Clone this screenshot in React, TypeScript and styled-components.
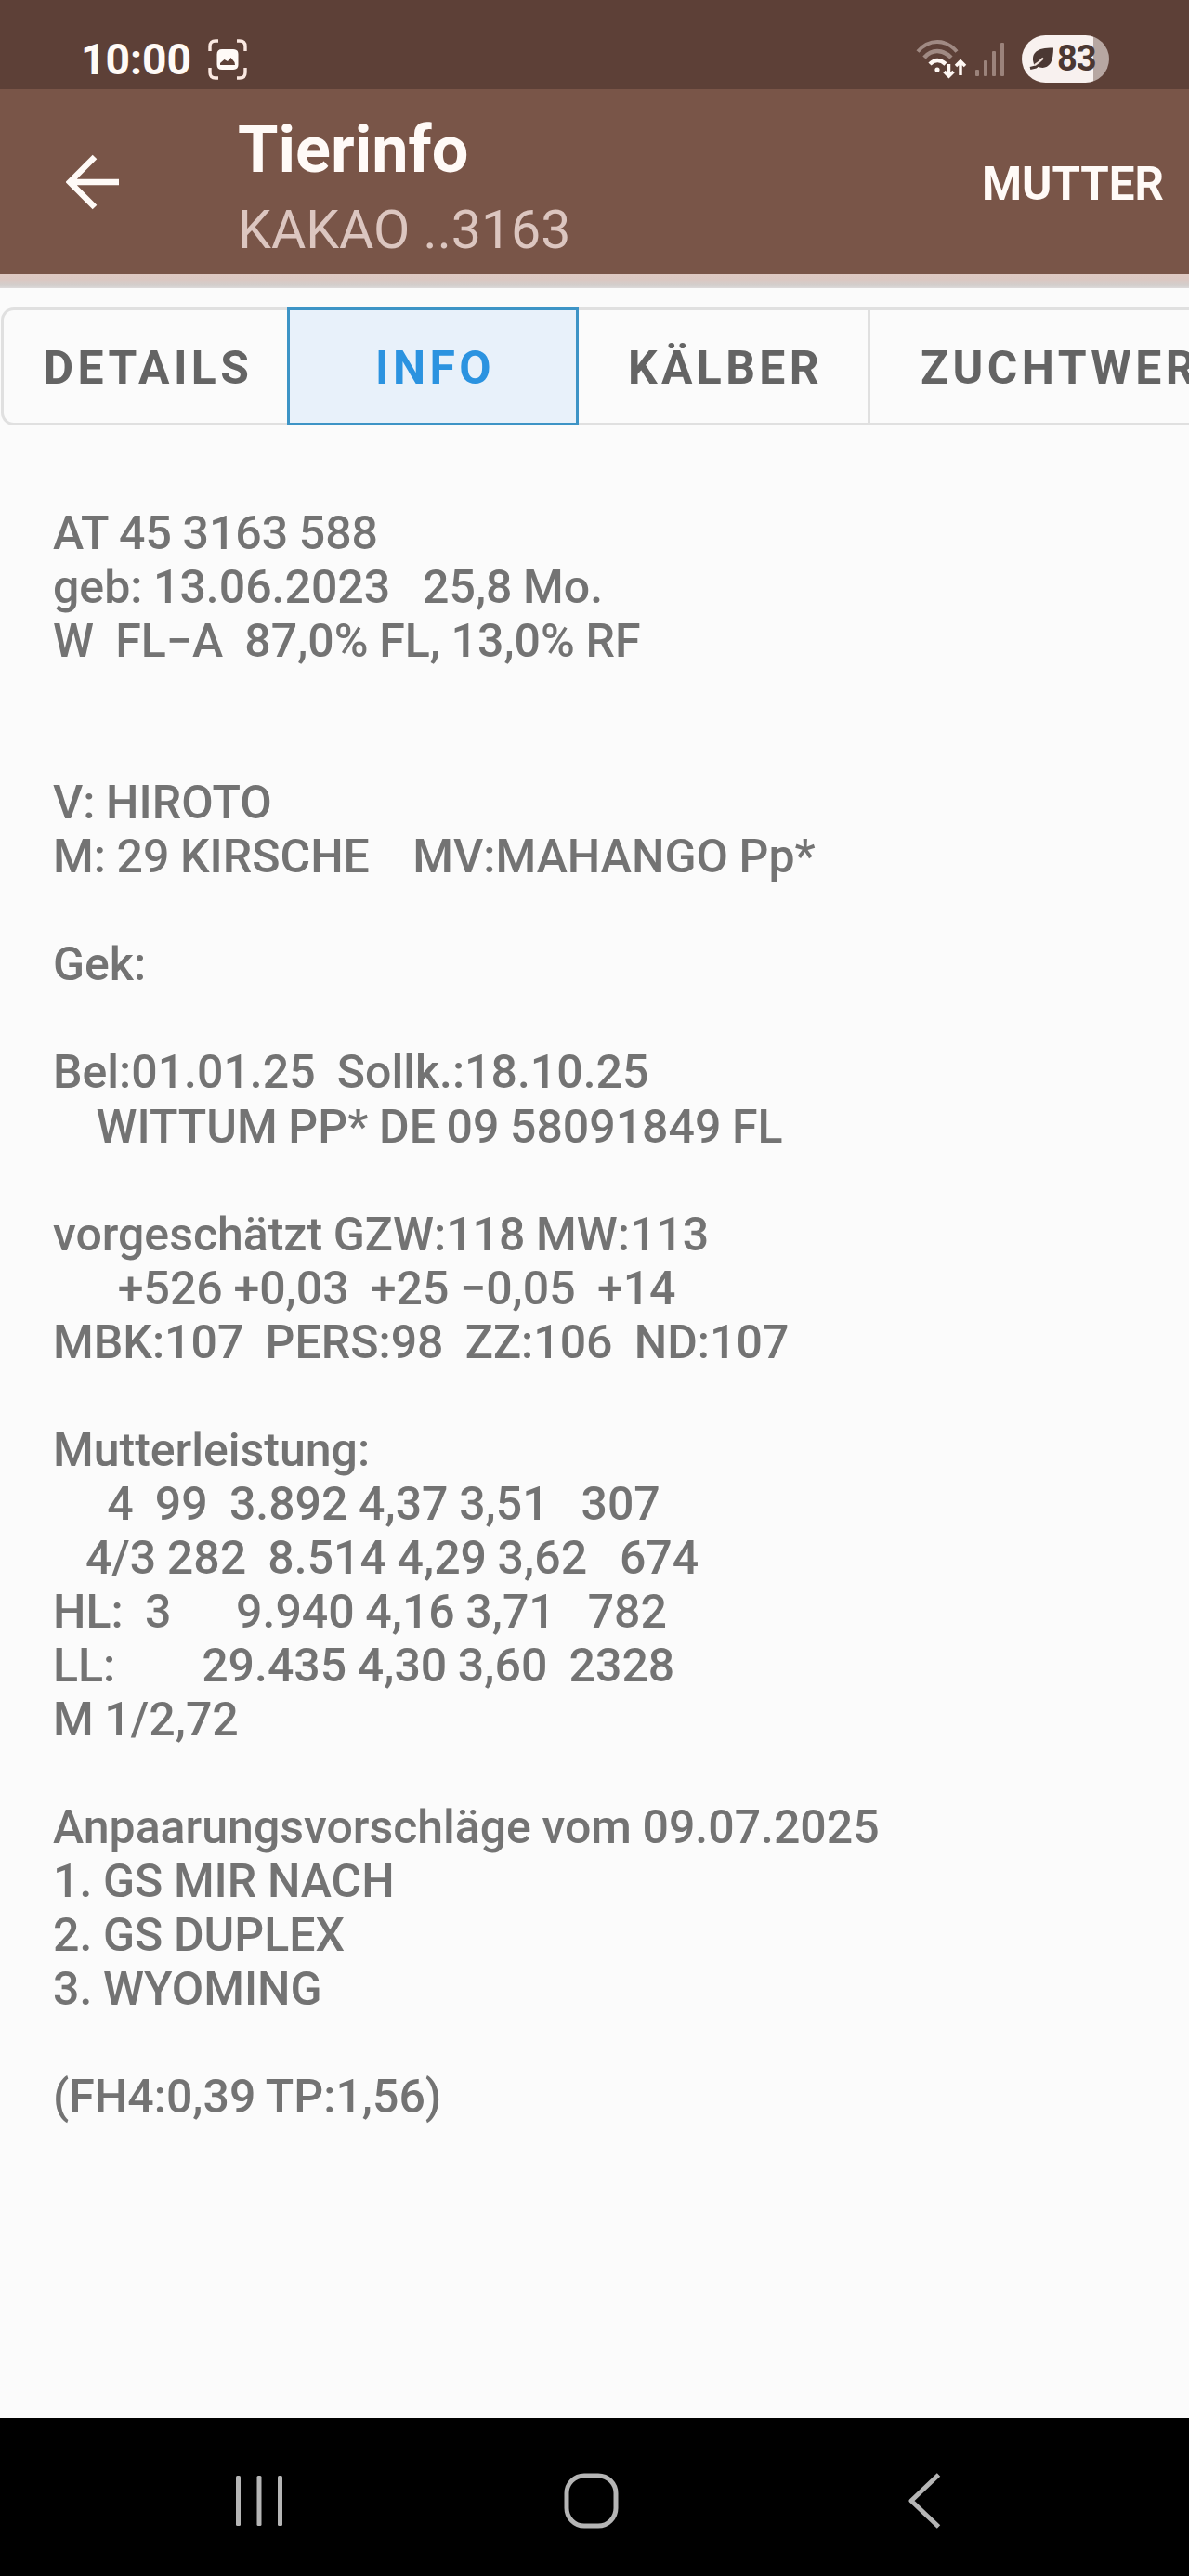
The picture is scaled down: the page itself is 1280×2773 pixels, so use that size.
import React from 'react';
import styled, { createGlobalStyle } from 'styled-components';

const GlobalStyle = createGlobalStyle`
  *, *::before, *::after { box-sizing: border-box; }
  html, body { margin: 0; padding: 0; background: #fbfbfb; }
  body { overflow: hidden; }
`;

const Screen = styled.div`
  width: 1280px;
  height: 2773px;
  display: flex;
  flex-direction: column;
  overflow: hidden;
  background: #fbfbfb;
  font-family: Roboto, 'Liberation Sans', sans-serif;
  color: #737373;
`;

const StatusBar = styled.div`
  flex: none;
  height: 96px;
  padding: 31px 86px 0 87px;
  display: flex;
  justify-content: space-between;
  align-items: flex-start;
  background: #5d4037;
`;

const StatusGroup = styled.div`
  display: flex;
  align-items: center;
  height: 66px;
`;

const Clock = styled.span`
  width: 137px;
  padding-bottom: 1px;
  font-size: 46.2px;
  line-height: 54px;
  font-weight: 700;
  color: #fffaf6;
`;

const BatteryPill = styled.div`
  width: 94px;
  height: 51px;
  margin: 0 0 2px 19px;
  padding-left: 8px;
  display: flex;
  align-items: center;
  gap: 3px;
  border-radius: 26px;
  background: linear-gradient(to right, #f8f1ef 0, #f8f1ef 77px, #b7a7a2 77px);
  color: #4b3833;
  font-size: 38px;
  font-weight: 700;
  line-height: 50px;
  letter-spacing: -1px;
`;

const AppBar = styled.header`
  flex: none;
  height: 199px;
  padding: 0 27px 0 71px;
  display: flex;
  align-items: center;
  background: #795548;
  color: #fffaf7;
`;

const BackButton = styled.div`
  width: 185px;
  display: flex;
`;

const Titles = styled.div`
  flex: 1;
  align-self: flex-start;
  padding-top: 23px;
  display: flex;
  flex-direction: column;
  gap: 12px;
`;

const Title = styled.h1`
  margin: 0;
  font-size: 70.2px;
  line-height: 84px;
  font-weight: 700;
`;

const Subtitle = styled.div`
  font-size: 57.2px;
  line-height: 66px;
  font-weight: 450;
  color: #dcc6c0;
`;

const Action = styled.div`
  padding-top: 4px;
  font-size: 49.2px;
  line-height: 60px;
  font-weight: 700;
`;

const Strip = styled.div`
  flex: none;
  height: 15px;
  background: linear-gradient(#dfc9c2 0, #dac8c3 7px, #d3cecc 12px, #dddada 15px);
`;

const Tabs = styled.nav`
  flex: none;
  margin: 21px 0 0 1px;
  height: 127px;
  display: flex;
  overflow: hidden;
`;

const Tab = styled.div<{ $width: number; $kind: 'first' | 'active' | 'plain' | 'last' }>`
  flex: none;
  width: ${p => p.$width}px;
  padding-top: 3px;
  padding-left: ${p => (p.$kind === 'last' ? 54 : p.$kind === 'first' ? 6 : 5)}px;
  display: flex;
  align-items: center;
  justify-content: ${p => (p.$kind === 'last' ? 'flex-start' : 'center')};
  white-space: nowrap;
  overflow: hidden;
  font-size: 49.8px;
  line-height: 60px;
  font-weight: 700;
  letter-spacing: 4.4px;
  color: ${p => (p.$kind === 'active' ? '#2b93e0' : '#646464')};
  background: ${p => (p.$kind === 'active' ? '#e8f1fa' : 'transparent')};
  border: 0 solid #e0e0e0;
  border-width: ${p => ({ first: '3px 0 3px 3px', active: '3px', plain: '3px 3px 3px 0', last: '3px 0' })[p.$kind]};
  border-color: ${p => (p.$kind === 'active' ? '#3d94c6' : '#e0e0e0')};
  border-radius: ${p => (p.$kind === 'first' ? '14px 0 0 14px' : '0')};
`;

const InfoText = styled.main`
  flex: 1;
  padding: 87px 0 0 57px;
  font-size: 50px;
  line-height: 58.04px;
  font-weight: 500;
  word-spacing: -0.8px;
  white-space: pre;
`;

const NavBar = styled.footer`
  flex: none;
  height: 170px;
  padding: 8px 105px 0 100px;
  display: grid;
  grid-template-columns: repeat(3, 1fr);
  align-items: center;
  justify-items: center;
  background: #000;
`;

const info = `AT 45 3163 588
geb: 13.06.2023   25,8 Mo.
W  FL−A  87,0% FL, 13,0% RF


V: HIROTO
M: 29 KIRSCHE    MV:MAHANGO Pp*

Gek:

Bel:01.01.25  Sollk.:18.10.25
    WITTUM PP* DE 09 58091849 FL

vorgeschätzt GZW:118 MW:113
      +526 +0,03  +25 −0,05  +14
MBK:107  PERS:98  ZZ:106  ND:107

Mutterleistung:
     4  99  3.892 4,37 3,51   307
   4/3 282  8.514 4,29 3,62   674
HL:  3      9.940 4,16 3,71   782
LL:        29.435 4,30 3,60  2328
M 1/2,72

Anpaarungsvorschläge vom 09.07.2025
1. GS MIR NACH
2. GS DUPLEX
3. WYOMING

(FH4:0,39 TP:1,56)`;

const CaptureIcon = () => (
  <svg width="42" height="44" viewBox="0 0 42 44" fill="none">
    <path d="M2 13V8Q2 2 8 2H11M31 2H34Q40 2 40 8V13M40 31V36Q40 42 34 42H31M11 42H8Q2 42 2 36V31" stroke="#fbe9e2" strokeWidth="3.4" />
    <path fillRule="evenodd" fill="#fffaf7" d="M15 11H27Q32.500 11 32.500 16.500V27.500Q32.500 33 27 33H15Q9.500 33 9.500 27.500V16.500Q9.500 11 15 11ZM13 28H29L28.500 25L24.500 20L21 24L17.500 22L13 26Z" />
  </svg>
);

const WifiIcon = () => (
  <svg width="56" height="44" viewBox="0 0 56 44" fill="none">
    <path d="M2 13.500Q11 3 23 3T44 13.500" stroke="#a08a83" strokeWidth="4" />
    <path d="M9 20Q15 13 23 13T38 20" stroke="#a08a83" strokeWidth="4.500" />
    <path d="M15 27Q23 19 32 27" stroke="#fff8f4" strokeWidth="4.500" />
    <circle cx="23" cy="33" r="2.600" fill="#fff8f4" />
    <path d="M35.500 27V39M30.500 35L35.500 40L40.500 35M48 39V25M43 29L48 24L53 29" stroke="#fff8f4" strokeWidth="3.500" />
  </svg>
);

const SignalIcon = () => (
  <svg width="31" height="40" viewBox="0 0 31 40">
    <g fill="#9b837b">
      <rect x="0" y="31" width="4" height="7" rx="1" />
      <rect x="9" y="21" width="4" height="17" rx="1" />
      <rect x="18" y="11" width="4" height="27" rx="1" />
      <rect x="27" y="2" width="4" height="36" rx="1" />
    </g>
  </svg>
);

const SignalWrap = styled.div`
  margin-left: 8px;
  padding-bottom: 1px;
  display: flex;
`;

const LeafIcon = () => (
  <svg width="27" height="26" viewBox="0 0 27 26" fill="none">
    <path d="M5 19Q1 7 12 3Q17 1 26 1.500Q26 12 23 18Q17 26 8 21Z" fill="#4b3833" />
    <path d="M1 23.500L7 22L12 18" stroke="#4b3833" strokeWidth="3" />
    <path d="M6 20Q11 17 15 12.500" stroke="#f2e3dc" strokeWidth="2.200" />
  </svg>
);

const ArrowBack = () => (
  <svg width="58" height="60" viewBox="0 0 58 60" fill="none">
    <path d="M57 30H5M31 3L4 30L31 57" stroke="#fffaf7" strokeWidth="6.500" />
  </svg>
);

const RecentsIcon = () => (
  <svg width="52" height="56" viewBox="0 0 52 56">
    <g fill="#b5b5b5">
      <rect x="1" y="1" width="5" height="54" rx="1.500" />
      <rect x="23.500" y="1" width="5" height="54" rx="1.500" />
      <rect x="46" y="1" width="5" height="54" rx="1.500" />
    </g>
  </svg>
);

const HomeIcon = () => (
  <svg width="61" height="60" viewBox="0 0 61 60" fill="none">
    <rect x="3" y="3" width="53" height="54" rx="19" stroke="#b5b5b5" strokeWidth="5" />
  </svg>
);

const BackIcon = () => (
  <svg width="36" height="60" viewBox="0 0 36 60" fill="none">
    <path d="M32.500 2L3 30L32.500 58" stroke="#b5b5b5" strokeWidth="5" strokeLinejoin="round" />
  </svg>
);

export default function App() {
  return (
    <Screen>
      <GlobalStyle />
      <StatusBar>
        <StatusGroup>
          <Clock>10:00</Clock>
          <CaptureIcon />
        </StatusGroup>
        <StatusGroup>
          <WifiIcon />
          <SignalWrap>
            <SignalIcon />
          </SignalWrap>
          <BatteryPill>
            <LeafIcon />
            <span>83</span>
          </BatteryPill>
        </StatusGroup>
      </StatusBar>
      <AppBar>
        <BackButton>
          <ArrowBack />
        </BackButton>
        <Titles>
          <Title>Tierinfo</Title>
          <Subtitle>KAKAO ..3163</Subtitle>
        </Titles>
        <Action>MUTTER</Action>
      </AppBar>
      <Strip />
      <Tabs>
        <Tab $kind="first" $width={308}>DETAILS</Tab>
        <Tab $kind="active" $width={314}>INFO</Tab>
        <Tab $kind="plain" $width={314}>KÄLBER</Tab>
        <Tab $kind="last" $width={343}>ZUCHTWER</Tab>
      </Tabs>
      <InfoText>{info}</InfoText>
      <NavBar>
        <RecentsIcon />
        <HomeIcon />
        <BackIcon />
      </NavBar>
    </Screen>
  );
}
